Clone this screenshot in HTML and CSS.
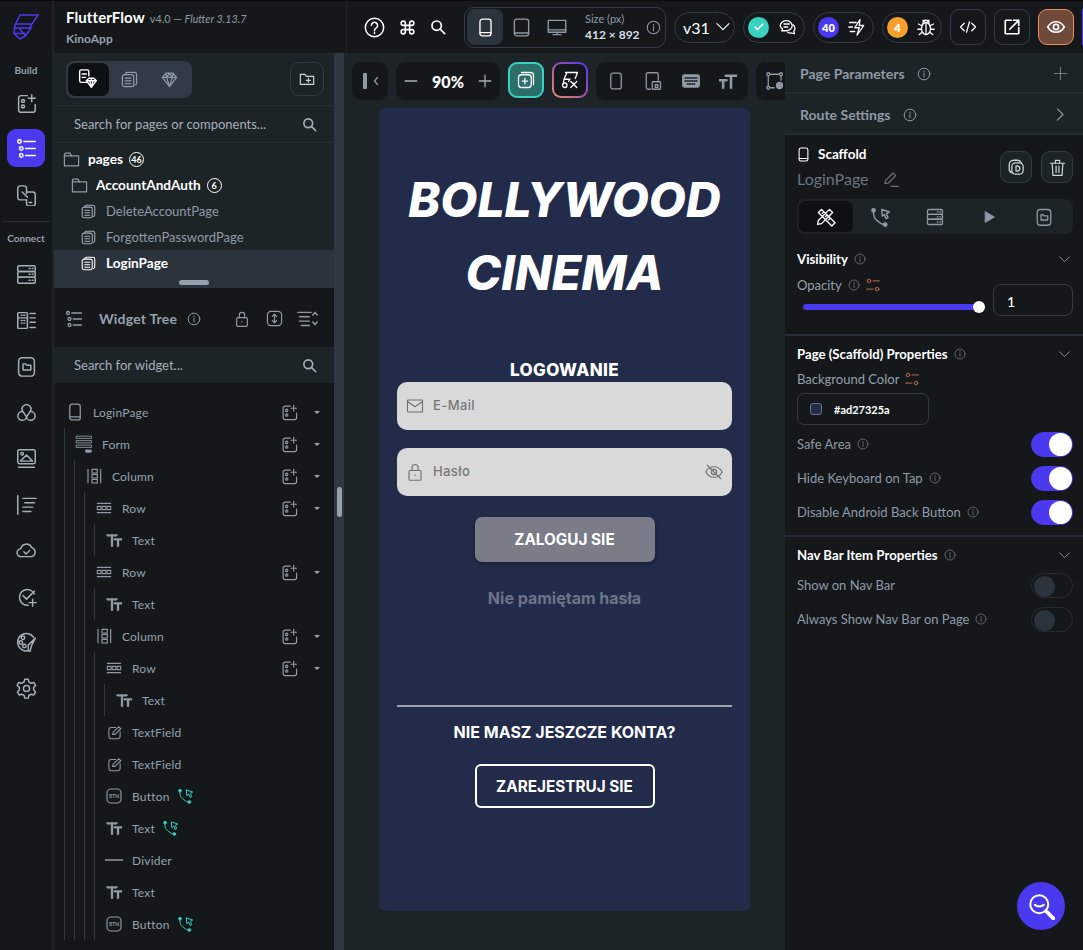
FILE: index.html
```html
<!DOCTYPE html>
<html lang="pl">
<head>
<meta charset="utf-8">
<title>FlutterFlow</title>
<link rel="stylesheet" href="styles.css">
</head>
<body>
<svg class="sprite" xmlns="http://www.w3.org/2000/svg">
  <defs>
    <symbol id="i-add" viewBox="0 0 24 24"><path d="M13 3H6a3 3 0 0 0-3 3v13a3 3 0 0 0 3 3h13a3 3 0 0 0 3-3v-6"/><circle cx="8" cy="9" r="1.7"/><circle cx="8" cy="15.500" r="1.700"/><path d="M18 2v8M14 6h8"/></symbol>
    <symbol id="i-tree" viewBox="0 0 24 24"><circle cx="4" cy="4" r="2"/><circle cx="6" cy="12" r="2"/><circle cx="6" cy="20" r="2"/><path d="M9 4h13M11 12h11M11 20h11"/></symbol>
    <symbol id="i-swap" viewBox="0 0 24 24"><path d="M12 17H5a3 3 0 0 1-3-3V4a3 3 0 0 1 3-3h4a3 3 0 0 1 3 3v6"/><path d="M7 8l6 6"/><path d="M12 8h7a3 3 0 0 1 3 3v10a3 3 0 0 1-3 3h-4a3 3 0 0 1-3-3v-4"/><path d="M15 20h3"/></symbol>
    <symbol id="i-db" viewBox="0 0 24 24"><rect x="2" y="2" width="20" height="6.500" rx="1.500"/><rect x="2" y="8.500" width="20" height="6.500" rx="1.500"/><rect x="2" y="15" width="20" height="7" rx="1.500"/><path d="M15 5.200h1M18.500 5.200h1M15 11.700h1M18.500 11.700h1M15 18.500h1M18.500 18.500h1"/></symbol>
    <symbol id="i-data" viewBox="0 0 24 24"><rect x="2" y="3" width="11" height="18" rx="1"/><path d="M2 9h11M6 6h1M9 6h1M6 12h1M9 12h1M6 15h1M9 15h1M16 4h6M16 9h6M16 14h6M16 20h6"/></symbol>
    <symbol id="i-file" viewBox="0 0 24 24"><rect x="3" y="2" width="18" height="21" rx="4"/><path d="M8 9h3l1 1.500h5V16H8z"/></symbol>
    <symbol id="i-nodes" viewBox="0 0 24 24"><path d="M8 11a5 5 0 1 1 8 0M8 11a5 5 0 1 0 4 6M16 11a5 5 0 1 1-4 6M8 11l4 6 4-6"/></symbol>
    <symbol id="i-media" viewBox="0 0 24 24"><rect x="2" y="2" width="20" height="16" rx="2"/><circle cx="7" cy="6.500" r="1.500"/><path d="M5 15l7-7 7 7zM3 22h18"/></symbol>
    <symbol id="i-align" viewBox="0 0 24 24"><path d="M2 2v21M8 5h15M10 10h11M8 15h11M8 20h9"/></symbol>
    <symbol id="i-cloud" viewBox="0 0 24 24"><path d="M6 19a4.500 4.500 0 0 1-.5-9 6.500 6.500 0 0 1 12.300-1.500A5.500 5.500 0 0 1 18 19z"/><path d="M9 13.500l2.500 2.500 4-4"/></symbol>
    <symbol id="i-check" viewBox="0 0 24 24"><path d="M21 9a9 9 0 1 0-7 13"/><path d="M8 11l4 4 9-9M19 15v8M15 19h8"/></symbol>
    <symbol id="i-palette" viewBox="0 0 24 24"><path d="M14 21.500A10 10 0 1 1 20 6"/><circle cx="8" cy="6.500" r="2"/><circle cx="5.500" cy="12" r="2"/><circle cx="9.500" cy="16" r="2"/><path d="M22 7l-4 8-2 7-2-1 0-6z"/></symbol>
    <symbol id="i-gear" viewBox="0 0 24 24"><circle cx="12" cy="12" r="3.500"/><path d="M10 1.500h4l.7 3 2.700 1.500 3-.9 2 3.400-2.200 2.200v3.100l2.200 2.200-2 3.400-3-.9-2.700 1.500-.7 3h-4l-.7-3-2.700-1.500-3 .9-2-3.400 2.200-2.200v-3.100L1.300 8.500l2-3.400 3 .9L9.300 4.500z"/></symbol>
    <symbol id="i-pages" viewBox="0 0 24 24"><rect x="2" y="5" width="16" height="17" rx="3"/><path d="M6 4a3 3 0 0 1 3-2h10a3 3 0 0 1 3 3v12a3 3 0 0 1-2 3M6 10h8M6 14h8M6 18h8"/></symbol>
    <symbol id="i-gem" viewBox="0 0 24 24"><path d="M7 3h10l5 6-10 13L2 9zM2 9h20M8 9l4 13 4-13M7 3l1 6 4-6 4 6 1-6"/></symbol>
    <symbol id="i-pagegem" viewBox="0 0 24 24"><path d="M11 16H4a2 2 0 0 1-2-2V3a2 2 0 0 1 2-2h7a2 2 0 0 1 2 2v5M5 6h5M5 10h4"/><path d="M13 11h6l3 3-6 8-6-8zM10 14h12M14 14l2 8 2-8M16 11v3"/></symbol>
    <symbol id="i-folder-add" viewBox="0 0 24 24"><path d="M2 5h7l2 3h11v12H2z"/><path d="M14 11v6M11 14h6"/></symbol>
    <symbol id="i-folder" viewBox="0 0 24 24"><path d="M2 21V5a2 2 0 0 1 2-2h6l2 4h10v14z"/><path d="M2 7h10"/></symbol>
    <symbol id="i-search" viewBox="0 0 24 24"><circle cx="10" cy="10" r="7"/><path d="M15 15l7 7"/></symbol>
    <symbol id="i-fabsearch" viewBox="0 0 24 24"><circle cx="10" cy="10" r="8"/><path d="M6 10.500c2 2 6 2 8 0" /><path d="M16 16l6.500 6.500" stroke-width="3.400"/></symbol>
    <symbol id="i-info" viewBox="0 0 24 24"><circle cx="12" cy="12" r="10"/><path d="M12 11v6M12 7v1.500"/></symbol>
    <symbol id="i-help" viewBox="0 0 24 24"><circle cx="12" cy="12" r="10.500"/><path d="M8.500 9.500a3.500 3.500 0 1 1 5.500 3c-1.300.8-2 1.500-2 3M12 17.500v1.500"/></symbol>
    <symbol id="i-cmd" viewBox="0 0 24 24"><path d="M9 9h6v6H9zM9 9H6a3 3 0 1 1 3-3zM15 9V6a3 3 0 1 1 3 3zM9 15v3a3 3 0 1 1-3-3zM15 15h3a3 3 0 1 1-3 3z"/></symbol>
    <symbol id="i-phone" viewBox="0 0 24 24"><rect x="5" y="1.500" width="14" height="21" rx="3"/><path d="M5 18.500h14"/></symbol>
    <symbol id="i-phone-plain" viewBox="0 0 24 24"><rect x="5" y="1.500" width="14" height="21" rx="3"/></symbol>
    <symbol id="i-tablet" viewBox="0 0 24 24"><rect x="3" y="1.500" width="18" height="21" rx="3"/><path d="M3 19h18"/></symbol>
    <symbol id="i-desktop" viewBox="0 0 24 24"><rect x="1" y="3" width="22" height="15"/><path d="M1 15h22M12 18v3M7 21h10"/></symbol>
    <symbol id="i-chev" viewBox="0 0 24 24"><path d="M3 7l9 9 9-9"/></symbol>
    <symbol id="i-tick" viewBox="0 0 24 24"><path d="M4 12l5 5 11-11"/></symbol>
    <symbol id="i-chat" viewBox="0 0 24 24"><path d="M3 11a8 7 0 0 1 16-1c0 4-4 7-8 7H5l1-2.500A7 7 0 0 1 3 11zM8 8h7M8 12h5"/><path d="M20 9a6 6 0 0 1 1 9l1 3-4-1a7 7 0 0 1-5-1"/></symbol>
    <symbol id="i-bolt" viewBox="0 0 24 24"><path d="M16 2L9 13h6l-3 10 9-13h-6zM2 6h9M1 12h5M3 18h6"/></symbol>
    <symbol id="i-bug" viewBox="0 0 24 24"><ellipse cx="12" cy="14" rx="6" ry="8"/><path d="M12 6v16M8 7a4 4 0 0 1 8 0M8 3l1.500 2M16 3l-1.500 2M6 10L2 8M18 10l4-2M6 15H1M18 15h5M7 19l-4 3M17 19l4 3"/></symbol>
    <symbol id="i-code" viewBox="0 0 24 24"><path d="M7 7l-5 5 5 5M17 7l5 5-5 5M14 5l-4 14"/></symbol>
    <symbol id="i-share" viewBox="0 0 24 24"><path d="M11 3H4a1 1 0 0 0-1 1v16a1 1 0 0 0 1 1h16a1 1 0 0 0 1-1v-7"/><path d="M9 15L21 3M14 3h7v7"/></symbol>
    <symbol id="i-eye" viewBox="0 0 24 24"><path d="M1 12s4-7 11-7 11 7 11 7-4 7-11 7S1 12 1 12z"/><circle cx="12" cy="12" r="3.500"/></symbol>
    <symbol id="i-panel" viewBox="0 0 24 24"><path d="M15 5l-6 7 6 7"/></symbol>
    <symbol id="i-plus" viewBox="0 0 24 24"><path d="M12 2v20M2 12h20"/></symbol>
    <symbol id="i-minus" viewBox="0 0 24 24"><path d="M2 12h20"/></symbol>
    <symbol id="i-addpages" viewBox="0 0 24 24"><rect x="2" y="5" width="17" height="17" rx="4"/><path d="M6 2h12a4 4 0 0 1 4 4v12M10.500 10v7M7 13.500h7"/></symbol>
    <symbol id="i-magic" viewBox="0 0 24 24"><path d="M6 2h16l-3 8M8 2L4 11h8l-2 3M4 11l-1 6M13 14l8 8M21 14l-8 8M16 16l2 2"/><circle cx="5" cy="19" r="3"/></symbol>
    <symbol id="i-pagecomp" viewBox="0 0 24 24"><path d="M9 23H5a2 2 0 0 1-2-2V3a2 2 0 0 1 2-2h12a2 2 0 0 1 2 2v8"/><rect x="11" y="13" width="11" height="10" rx="1"/><rect x="15" y="17" width="3.500" height="3.500"/></symbol>
    <symbol id="i-kbd" viewBox="0 0 24 24"><rect x="1" y="4" width="22" height="16" rx="2" fill="currentColor"/><path d="M4 8h16M4 12h16M7 16h10" stroke="#14181b" stroke-dasharray="1.500 1.500"/></symbol>
    <symbol id="i-tt" viewBox="0 0 24 24"><path d="M9 5h14M16 5v16M1 11h9M5.500 11v10" stroke-width="3.500"/></symbol>
    <symbol id="i-graph" viewBox="0 0 24 24"><circle cx="3" cy="3" r="2"/><circle cx="20" cy="3" r="2"/><circle cx="3" cy="21" r="2"/><path d="M5 3h13M3 5v14M5 21h6M20 5v6"/><circle cx="18" cy="18" r="4" fill="currentColor"/></symbol>
    <symbol id="i-lock" viewBox="0 0 24 24"><rect x="4" y="10" width="16" height="13" rx="1.500"/><path d="M8 10V6a4 4 0 0 1 8 0v4M12 16v.500"/></symbol>
    <symbol id="i-expand" viewBox="0 0 24 24"><rect x="2" y="2" width="20" height="20" rx="5"/><path d="M12 6v12M9 9l3-3 3 3M9 15l3 3 3-3"/></symbol>
    <symbol id="i-collapse" viewBox="0 0 24 24"><path d="M1 5h15M3 10h11M3 15h11M5 20h9M18 8l2.500-3 2.500 3M18 16l2.500 3 2.500-3"/></symbol>
    <symbol id="i-form" viewBox="0 0 24 24"><rect x="2" y="1.500" width="20" height="3"/><rect x="2" y="7.500" width="20" height="3"/><rect x="2" y="13.500" width="20" height="3"/><rect x="14" y="20" width="8" height="3" rx="1" fill="currentColor"/></symbol>
    <symbol id="i-col" viewBox="0 0 24 24"><path d="M3 2v20M22 2v20"/><rect x="9" y="2" width="8" height="5.500"/><rect x="9" y="9.500" width="8" height="5.500"/><rect x="9" y="17" width="8" height="5.500"/></symbol>
    <symbol id="i-row" viewBox="0 0 24 24"><path d="M2 5h20M2 19h20"/><rect x="2" y="9.500" width="5.500" height="5"/><rect x="9.300" y="9.500" width="5.500" height="5"/><rect x="16.500" y="9.500" width="5.500" height="5"/></symbol>
    <symbol id="i-text" viewBox="0 0 24 24"><path d="M2 5h14M9 5v16M13 11h10M18 11v10" stroke-width="3.400"/></symbol>
    <symbol id="i-field" viewBox="0 0 24 24"><path d="M14 4H7a4 4 0 0 0-4 4v10a4 4 0 0 0 4 4h10a4 4 0 0 0 4-4v-7"/><path d="M9 15l1-4 9-8 3 3-9 9z"/></symbol>
    <symbol id="i-btn" viewBox="0 0 24 24"><rect x="1.500" y="1.500" width="21" height="21" rx="6"/></symbol>
    <symbol id="i-action" viewBox="0 0 24 24"><circle cx="3" cy="4" r="2" fill="currentColor"/><circle cx="17" cy="21" r="2" fill="currentColor"/><path d="M3 6c0 6 1 8 4 10 3 2 4 4 8 5M13 3l9 3-3.500 2 2 5-2.500 1-2-5-2.500 2z"/></symbol>
    <symbol id="i-divider" viewBox="0 0 24 24"><path d="M0 12h24" stroke-width="2"/></symbol>
    <symbol id="i-ruler" viewBox="0 0 24 24"><path d="M3 7l4-4 17 17-4 4zM8 8l2-2M12 12l2-2M16 16l2-2M17 3l4 4-14 14-5 1 1-5z" transform="scale(.95)"/></symbol>
    <symbol id="i-play" viewBox="0 0 24 24"><path d="M6 3l15 9-15 9z" fill="currentColor"/></symbol>
    <symbol id="i-pencil" viewBox="0 0 24 24"><path d="M3 19l1-5L15 3l4 4L8 18zM12 23h11"/></symbol>
    <symbol id="i-dup" viewBox="0 0 24 24"><path d="M7 20a6 6 0 0 1-4-6V9a6 6 0 0 1 6-6h5a6 6 0 0 1 5 3"/><rect x="6.500" y="6.500" width="15" height="15" rx="5"/><path d="M12 10.500v7h1.500a3.500 3.500 0 0 0 0-7z"/></symbol>
    <symbol id="i-trash" viewBox="0 0 24 24"><path d="M2 6h20M9 6V2h6v4M4.500 6l1 17h13l1-17M10 10v9M14 10v9"/></symbol>
    <symbol id="i-vars" viewBox="0 0 24 24"><circle cx="5" cy="5" r="3"/><circle cx="19" cy="19" r="3"/><path d="M12 5h11M1 19h11"/></symbol>
    <symbol id="i-mail" viewBox="0 0 24 24"><rect x="2" y="4" width="20" height="16" rx="1"/><path d="M2 6l10 7 10-7"/></symbol>
    <symbol id="i-eyeoff" viewBox="0 0 24 24"><path d="M1 12s4-7 11-7 11 7 11 7-4 7-11 7S1 12 1 12zM3 3l18 18"/><circle cx="12" cy="12" r="3.500"/></symbol>
  </defs>
</svg>

<div class="app">
  <header class="topbar">
    <div class="logo-cell">
      <svg class="logo" viewBox="14 14 26 26"><path d="M21 15H39L33 24H16.500ZM16.500 24H32.500L31 28H15.500ZM15.500 28H32L26.500 36 21 39 15 33.500ZM20 28L26.500 36M15 33.500H26.500"/></svg>
    </div>
    <div class="brand">
      <div class="brand-line"><span class="brand-name">FlutterFlow</span><span class="brand-ver">v4.0 — <em>Flutter 3.13.7</em></span></div>
      <div class="brand-proj">KinoApp</div>
    </div>
    <div class="top-tools">
      <button class="plain"><svg class="ic ic-21"><use href="#i-help"/></svg></button>
      <button class="plain"><svg class="ic ic-17 med"><use href="#i-cmd"/></svg></button>
      <button class="plain"><svg class="ic ic-16 thick"><use href="#i-search"/></svg></button>
    </div>
    <div class="device-group">
      <span class="device active"><svg class="ic ic-19"><use href="#i-phone"/></svg></span>
      <span class="device"><svg class="ic ic-19 muted"><use href="#i-tablet"/></svg></span>
      <span class="device"><svg class="ic ic-19 muted wide"><use href="#i-desktop"/></svg></span>
      <div class="size"><span class="size-l">Size (px)</span><span class="size-v">412 × 892</span></div>
      <svg class="ic ic-15 muted"><use href="#i-info"/></svg>
    </div>
    <div class="pill version">v31<svg class="ic ic-16"><use href="#i-chev"/></svg></div>
    <div class="pill pill-chat"><span class="dot teal"><svg class="ic ic-12 tick"><use href="#i-tick"/></svg></span><svg class="ic ic-18"><use href="#i-chat"/></svg></div>
    <div class="pill"><span class="dot indigo">40</span><svg class="ic ic-18"><use href="#i-bolt"/></svg></div>
    <div class="pill pill-bug"><span class="dot orange">4</span><svg class="ic ic-18"><use href="#i-bug"/></svg></div>
    <button class="sq"><svg class="ic ic-18"><use href="#i-code"/></svg></button>
    <button class="sq"><svg class="ic ic-18 med"><use href="#i-share"/></svg></button>
    <button class="sq eye"><svg class="ic ic-18 med"><use href="#i-eye"/></svg></button>
    <div class="run-edge"></div>
  </header>

  <div class="main">
    <nav class="rail">
      <div class="rail-label">Build</div>
      <a class="rail-item"><svg class="ic ic-21"><use href="#i-add"/></svg></a>
      <a class="rail-item active"><svg class="ic ic-21"><use href="#i-tree"/></svg></a>
      <a class="rail-item"><svg class="ic ic-21"><use href="#i-swap"/></svg></a>
      <div class="rail-sep"></div>
      <div class="rail-label">Connect</div>
      <a class="rail-item"><svg class="ic ic-21"><use href="#i-db"/></svg></a>
      <a class="rail-item"><svg class="ic ic-21"><use href="#i-data"/></svg></a>
      <a class="rail-item"><svg class="ic ic-21"><use href="#i-file"/></svg></a>
      <a class="rail-item"><svg class="ic ic-21"><use href="#i-nodes"/></svg></a>
      <a class="rail-item"><svg class="ic ic-21"><use href="#i-media"/></svg></a>
      <a class="rail-item"><svg class="ic ic-21"><use href="#i-align"/></svg></a>
      <a class="rail-item"><svg class="ic ic-21"><use href="#i-cloud"/></svg></a>
      <a class="rail-item"><svg class="ic ic-21"><use href="#i-check"/></svg></a>
      <a class="rail-item"><svg class="ic ic-21"><use href="#i-palette"/></svg></a>
      <a class="rail-item"><svg class="ic ic-21"><use href="#i-gear"/></svg></a>
    </nav>

    <aside class="left">
      <div class="left-body">
        <div class="tabs-row">
          <div class="seg">
            <span class="seg-item on"><svg class="ic ic-20 white"><use href="#i-pagegem"/></svg></span>
            <span class="seg-item"><svg class="ic ic-17 muted"><use href="#i-pages"/></svg></span>
            <span class="seg-item"><svg class="ic ic-17 muted"><use href="#i-gem"/></svg></span>
          </div>
          <button class="icon-btn"><svg class="ic ic-16"><use href="#i-folder-add"/></svg></button>
        </div>
        <div class="search"><span>Search for pages or components...</span><svg class="ic ic-15 thick"><use href="#i-search"/></svg></div>
        <div class="pages">
          <div class="p-row"><svg class="ic ic-17 muted"><use href="#i-folder"/></svg><b>pages</b><span class="count">46</span></div>
          <div class="p-row d1"><svg class="ic ic-17 muted"><use href="#i-folder"/></svg><b>AccountAndAuth</b><span class="count">6</span></div>
          <div class="p-row d2"><svg class="ic ic-15 light"><use href="#i-pages"/></svg><span>DeleteAccountPage</span></div>
          <div class="p-row d2"><svg class="ic ic-15 light"><use href="#i-pages"/></svg><span>ForgottenPasswordPage</span></div>
          <div class="p-row d2 sel"><svg class="ic ic-15 white"><use href="#i-pages"/></svg><b>LoginPage</b></div>
        </div>
        <div class="h-scroll"><span></span></div>

        <div class="wt-head">
          <svg class="ic ic-18 muted"><use href="#i-tree"/></svg>
          <span class="wt-title">Widget Tree</span>
          <svg class="ic ic-14 muted"><use href="#i-info"/></svg>
          <span class="grow"></span>
          <svg class="ic ic-16 muted"><use href="#i-lock"/></svg>
          <svg class="ic ic-17 muted"><use href="#i-expand"/></svg>
          <svg class="ic ic-21 muted"><use href="#i-collapse"/></svg>
        </div>
        <div class="search wt-search"><span>Search for widget...</span><svg class="ic ic-15 thick"><use href="#i-search"/></svg></div>

        <div class="tree">
          <div class="row top"><span class="ti"><svg class="ic ic-18 muted"><use href="#i-phone"/></svg></span><span class="tl">LoginPage</span><span class="ta"><svg class="ic ic-17 muted"><use href="#i-add"/></svg><i class="caret"></i></span></div>
          <div class="kids">
            <div class="row"><span class="ti"><svg class="ic ic-18 muted thin"><use href="#i-form"/></svg></span><span class="tl">Form</span><span class="ta"><svg class="ic ic-17 muted"><use href="#i-add"/></svg><i class="caret"></i></span></div>
            <div class="kids">
              <div class="row"><span class="ti"><svg class="ic ic-16 muted"><use href="#i-col"/></svg></span><span class="tl">Column</span><span class="ta"><svg class="ic ic-17 muted"><use href="#i-add"/></svg><i class="caret"></i></span></div>
              <div class="kids">
                <div class="row"><span class="ti"><svg class="ic ic-16 muted"><use href="#i-row"/></svg></span><span class="tl">Row</span><span class="ta"><svg class="ic ic-17 muted"><use href="#i-add"/></svg><i class="caret"></i></span></div>
                <div class="kids">
                  <div class="row"><span class="ti"><svg class="ic ic-16 muted"><use href="#i-text"/></svg></span><span class="tl">Text</span></div>
                </div>
                <div class="row"><span class="ti"><svg class="ic ic-16 muted"><use href="#i-row"/></svg></span><span class="tl">Row</span><span class="ta"><svg class="ic ic-17 muted"><use href="#i-add"/></svg><i class="caret"></i></span></div>
                <div class="kids">
                  <div class="row"><span class="ti"><svg class="ic ic-16 muted"><use href="#i-text"/></svg></span><span class="tl">Text</span></div>
                </div>
                <div class="row"><span class="ti"><svg class="ic ic-16 muted"><use href="#i-col"/></svg></span><span class="tl">Column</span><span class="ta"><svg class="ic ic-17 muted"><use href="#i-add"/></svg><i class="caret"></i></span></div>
                <div class="kids">
                  <div class="row"><span class="ti"><svg class="ic ic-16 muted"><use href="#i-row"/></svg></span><span class="tl">Row</span><span class="ta"><svg class="ic ic-17 muted"><use href="#i-add"/></svg><i class="caret"></i></span></div>
                  <div class="kids">
                    <div class="row"><span class="ti"><svg class="ic ic-16 muted"><use href="#i-text"/></svg></span><span class="tl">Text</span></div>
                  </div>
                  <div class="row"><span class="ti"><svg class="ic ic-15 muted"><use href="#i-field"/></svg></span><span class="tl">TextField</span></div>
                  <div class="row"><span class="ti"><svg class="ic ic-15 muted"><use href="#i-field"/></svg></span><span class="tl">TextField</span></div>
                  <div class="row"><span class="ti btn-ic"><svg class="ic ic-16 muted"><use href="#i-btn"/></svg><small>BTN</small></span><span class="tl">Button</span><svg class="ic ic-16 action"><use href="#i-action"/></svg></div>
                  <div class="row"><span class="ti"><svg class="ic ic-16 muted"><use href="#i-text"/></svg></span><span class="tl">Text</span><svg class="ic ic-16 action"><use href="#i-action"/></svg></div>
                  <div class="row"><span class="ti"><svg class="ic ic-18 muted"><use href="#i-divider"/></svg></span><span class="tl">Divider</span></div>
                  <div class="row"><span class="ti"><svg class="ic ic-16 muted"><use href="#i-text"/></svg></span><span class="tl">Text</span></div>
                  <div class="row"><span class="ti btn-ic"><svg class="ic ic-16 muted"><use href="#i-btn"/></svg><small>BTN</small></span><span class="tl">Button</span><svg class="ic ic-16 action"><use href="#i-action"/></svg></div>
                </div>
              </div>
            </div>
          </div>
        </div>
      </div>
      <div class="v-scroll"><span></span></div>
    </aside>

    <section class="canvas">
      <div class="toolbar">
        <div class="tg tg-one"><span class="panel-bar"></span><svg class="ic ic-12 muted thick"><use href="#i-panel"/></svg></div>
        <div class="tg tg-zoom"><svg class="ic ic-14 light med"><use href="#i-minus"/></svg><b>90%</b><svg class="ic ic-14 light med"><use href="#i-plus"/></svg></div>
        <button class="tb teal-btn"><svg class="ic ic-18 white"><use href="#i-addpages"/></svg></button>
        <button class="tb grad-btn"><span><svg class="ic ic-18 white"><use href="#i-magic"/></svg></span></button>
        <div class="tg tg-dev">
          <svg class="ic ic-18 muted"><use href="#i-phone-plain"/></svg>
          <svg class="ic ic-18 muted"><use href="#i-pagecomp"/></svg>
          <svg class="ic ic-18 muted"><use href="#i-kbd"/></svg>
          <svg class="ic ic-18 muted"><use href="#i-tt"/></svg>
        </div>
        <div class="tg tg-last"><svg class="ic ic-18 muted"><use href="#i-graph"/></svg></div>
      </div>

      <div class="phone">
        <h1 class="title">BOLLYWOOD<br>CINEMA</h1>
        <h2 class="login">LOGOWANIE</h2>
        <div class="field"><svg class="ic ic-18 gr"><use href="#i-mail"/></svg><span>E-Mail</span></div>
        <div class="field f2"><svg class="ic ic-18 gr"><use href="#i-lock"/></svg><span>Hasło</span><svg class="ic ic-18 gr end"><use href="#i-eyeoff"/></svg></div>
        <div class="btn-main">ZALOGUJ SIE</div>
        <div class="forgot">Nie pamiętam hasła</div>
        <div class="ph-div"></div>
        <div class="noacc">NIE MASZ JESZCZE KONTA?</div>
        <div class="btn-out">ZAREJESTRUJ SIE</div>
      </div>
    </section>

    <aside class="right">
      <div class="acc"><span>Page Parameters</span><svg class="ic ic-14 muted"><use href="#i-info"/></svg><span class="grow"></span><svg class="ic ic-15 muted thin"><use href="#i-plus"/></svg></div>
      <div class="acc"><span>Route Settings</span><svg class="ic ic-14 muted"><use href="#i-info"/></svg><span class="grow"></span><svg class="ic ic-15 muted rot"><use href="#i-chev"/></svg></div>

      <div class="scaffold">
        <div class="sc-left">
          <div class="sc-type"><svg class="ic ic-15 white"><use href="#i-phone"/></svg><b>Scaffold</b></div>
          <div class="sc-name"><span>LoginPage</span><svg class="ic ic-16 dim"><use href="#i-pencil"/></svg></div>
        </div>
        <button class="icon-btn small"><svg class="ic ic-18"><use href="#i-dup"/></svg></button>
        <button class="icon-btn small"><svg class="ic ic-17"><use href="#i-trash"/></svg></button>
      </div>
      <div class="r-tabs">
        <span class="r-tab on"><svg class="ic ic-20 white"><use href="#i-ruler"/></svg></span>
        <span class="r-tab"><svg class="ic ic-20 muted"><use href="#i-action"/></svg></span>
        <span class="r-tab"><svg class="ic ic-18 muted"><use href="#i-db"/></svg></span>
        <span class="r-tab"><svg class="ic ic-14 muted"><use href="#i-play"/></svg></span>
        <span class="r-tab"><svg class="ic ic-18 muted"><use href="#i-file"/></svg></span>
      </div>

      <section class="sec first">
        <div class="sec-h"><b>Visibility</b><svg class="ic ic-12 dim"><use href="#i-info"/></svg><span class="grow"></span><svg class="ic ic-13 muted"><use href="#i-chev"/></svg></div>
        <div class="opacity">
          <div class="op-left">
            <div class="lbl"><span>Opacity</span><svg class="ic ic-12 dim"><use href="#i-info"/></svg><svg class="ic ic-14 orange-ic"><use href="#i-vars"/></svg></div>
            <div class="slider"><i></i></div>
          </div>
          <div class="num">1</div>
        </div>
      </section>

      <section class="sec">
        <div class="sec-h"><b>Page (Scaffold) Properties</b><svg class="ic ic-12 dim"><use href="#i-info"/></svg><span class="grow"></span><svg class="ic ic-13 muted"><use href="#i-chev"/></svg></div>
        <div class="lbl bg"><span>Background Color</span><svg class="ic ic-14 orange-ic"><use href="#i-vars"/></svg></div>
        <div class="color"><i></i><b>#ad27325a</b></div>
        <div class="opt"><span>Safe Area</span><svg class="ic ic-12 dim"><use href="#i-info"/></svg><span class="grow"></span><span class="tog on"></span></div>
        <div class="opt"><span>Hide Keyboard on Tap</span><svg class="ic ic-12 dim"><use href="#i-info"/></svg><span class="grow"></span><span class="tog on"></span></div>
        <div class="opt"><span>Disable Android Back Button</span><svg class="ic ic-12 dim"><use href="#i-info"/></svg><span class="grow"></span><span class="tog on"></span></div>
      </section>

      <section class="sec last">
        <div class="sec-h"><b>Nav Bar Item Properties</b><svg class="ic ic-12 dim"><use href="#i-info"/></svg><span class="grow"></span><svg class="ic ic-13 muted"><use href="#i-chev"/></svg></div>
        <div class="opt"><span>Show on Nav Bar</span><span class="grow"></span><span class="tog"></span></div>
        <div class="opt"><span>Always Show Nav Bar on Page</span><svg class="ic ic-12 dim"><use href="#i-info"/></svg><span class="grow"></span><span class="tog"></span></div>
      </section>
    </aside>
  </div>
</div>

<button class="fab"><svg class="ic ic-fab"><use href="#i-fabsearch"/></svg></button>
</body>
</html>
```
FILE: styles.css
```css
* { box-sizing: border-box; }
html, body { margin: 0; height: 100%; overflow: hidden; }
body { background: #14181b; color: #fff; font-family: "Lato", "Inter", sans-serif; font-size: 13px; }
.sprite { position: absolute; width: 0; height: 0; }
button { background: none; border: 0; padding: 0; color: inherit; font: inherit; }
b { font-weight: 700; }
.grow { flex: 1; }

.ic { fill: none; stroke: currentColor; stroke-width: 1.7; stroke-linecap: round; stroke-linejoin: round; flex: none; display: block; }
.ic-12 { width: 12px; height: 12px; } .ic-13 { width: 13px; height: 13px; }
.ic-14 { width: 14px; height: 14px; } .ic-15 { width: 15px; height: 15px; }
.ic-16 { width: 16px; height: 16px; } .ic-17 { width: 17px; height: 17px; }
.ic-18 { width: 18px; height: 18px; } .ic-19 { width: 19px; height: 19px; }
.ic-20 { width: 20px; height: 20px; } .ic-21 { width: 21px; height: 21px; }
.muted { color: #8f9aa6; } .dim { color: #6b7580; } .white { color: #fff; } .light { color: #a5afb9; }
.thick { stroke-width: 2.6; } .med { stroke-width: 2.2; } .thin { stroke-width: 1.2; }
.wide { width: 22px; }
.rot { transform: rotate(-90deg); }
.action { color: #39d2c0; margin-left: 8px; stroke-width: 1.5; }
.orange-ic { color: #c26b45; }
.gr { color: #6f6f6f; stroke-width: 1.5; }
.tick { stroke-width: 3; }

.app { display: flex; flex-direction: column; height: 950px; width: 1083px; overflow: hidden; }

/* Top bar */
.topbar { height: 53px; flex: none; display: flex; align-items: center; border-top: 1px solid #0a0c0d; background: #14181b; }
.logo-cell { width: 54px; height: 100%; display: flex; align-items: center; justify-content: center; border-right: 2px solid #1d2428; }
.logo { width: 26px; height: 26px; fill: none; stroke: #4b39ef; stroke-width: 1.5; }
.brand { width: 293px; padding-left: 12px; height: 100%; display: flex; flex-direction: column; justify-content: center; gap: 5px; border-right: 1px solid #1d2428; }
.brand-line { display: flex; align-items: baseline; gap: 5px; }
.brand-name { font-size: 15px; font-weight: 700; letter-spacing: .1px; }
.brand-ver { font-size: 10.800px; color: #8f9aa6; }
.brand-proj { font-size: 12px; color: #95a1ac; font-weight: 700; }
.top-tools { display: flex; align-items: center; gap: 14px; margin-left: 17px; width: 100px; }
.plain { display: flex; }
.device-group { width: 202px; height: 41px; border: 1px solid #323b45; border-radius: 10px; display: flex; align-items: center; padding: 2px; margin-right: 8px; }
.device { width: 36px; height: 36px; border-radius: 8px; display: flex; align-items: center; justify-content: center; flex: none; }
.device.active { background: #2b333c; }
.size { display: flex; flex-direction: column; margin-left: 10px; margin-right: 11px; gap: 2px; width: 50px; }
.size-l { font-size: 11px; color: #8f9aa6; }
.size-v { font-size: 12px; font-weight: 700; color: #d9dee3; white-space: nowrap; }
.pill { height: 31px; border: 1px solid #323b45; border-radius: 16px; display: flex; align-items: center; gap: 9px; padding: 0 9px 0 4px; margin-right: 8px; width: 61px; flex: none; }
.pill-chat { width: 62px; }
.pill-bug { width: 60px; }
.pill.version { padding: 0 0 0 8px; gap: 5px; font-size: 16px; }
.dot { width: 21px; height: 21px; border-radius: 50%; display: flex; align-items: center; justify-content: center; font-size: 11px; font-weight: 800; flex: none; }
.dot.teal { background: #39d2c0; } .dot.indigo { background: #4b39ef; } .dot.orange { background: #f8a02c; }
.sq { width: 36px; height: 36px; border: 1px solid #323b45; border-radius: 9px; display: flex; align-items: center; justify-content: center; margin-right: 8px; flex: none; }
.sq.eye { background: #6f4a3a; border: 1px solid #ee8b60; }
.run-edge { width: 1px; height: 36px; background: #4b39ef; }

.main { flex: 1; display: flex; min-height: 0; }

/* Rail */
.rail { width: 54px; flex: none; border-right: 2px solid #1d2428; display: flex; flex-direction: column; align-items: center; padding-top: 10px; background: #14181b; }
.rail-label { font-size: 10px; font-weight: 700; color: #95a1ac; height: 14px; line-height: 14px; margin-bottom: 3px; }
.rail-sep + .rail-label { margin-bottom: 6px; }
.rail-item { width: 38px; height: 46px; padding: 4px 0; display: flex; align-items: center; justify-content: center; color: #a5afb9; }
.rail-item.active { color: #fff; background: #4b39ef; height: 38px; border-radius: 9px; margin: 3px 0 5px; padding: 0; }
.rail-sep { width: 48px; height: 1px; background: #262d34; margin: 3px 0 9px; }

/* Left panel */
.left { width: 290px; flex: none; display: flex; }
.left-body { width: 280px; display: flex; flex-direction: column; min-height: 0; }
.tabs-row { height: 53px; display: flex; align-items: center; justify-content: space-between; padding: 0 10px 0 12px; background: #1d2428; border-bottom: 1px solid #262d34; flex: none; }
.seg { width: 126px; height: 37px; background: #323b45; border-radius: 8px; display: flex; padding: 2px; }
.seg-item { width: 41px; display: flex; align-items: center; justify-content: center; border-radius: 7px; }
.seg-item.on { background: #0e1113; }
.icon-btn { width: 34px; height: 34px; border: 1px solid #323b45; border-radius: 9px; display: flex; align-items: center; justify-content: center; color: #cfd5da; flex: none; }
.search { height: 37px; display: flex; align-items: center; justify-content: space-between; padding: 0 17px 0 20px; background: #1d2428; color: #a5afb9; border-bottom: 1px solid #262d34; flex: none; font-size: 13px; }
.search .ic { color: #a5afb9; }
.pages { background: #1d2428; padding-top: 3px; flex: none; }
.p-row { height: 26px; display: flex; align-items: center; gap: 8px; padding-left: 9px; color: #8f9aa6; }
.p-row b { color: #fff; font-size: 13.600px; }
.p-row.d1 { padding-left: 17px; }
.p-row.d2 { padding-left: 27px; gap: 10px; }
.p-row.sel { background: #2b333c; }
.count { width: 15px; height: 15px; border: 1px solid #fff; border-radius: 50%; font-size: 9px; font-weight: 700; color: #fff; display: flex; align-items: center; justify-content: center; margin-left: -2px; }
.h-scroll { height: 12px; background: #2b333c; flex: none; display: flex; justify-content: center; align-items: center; }
.h-scroll span { width: 30px; height: 5px; border-radius: 3px; background: #95a1ac; }
.wt-head { height: 59px; padding: 2px 16px 0 11px; flex: none; display: flex; align-items: center; gap: 8px; }
.wt-title { font-size: 14px; font-weight: 700; color: #95a1ac; margin-left: 8px; margin-right: 2px; letter-spacing: .2px; }
.wt-head .ic-16 { margin-right: 8px; }
.wt-head .ic-17 { margin-right: 6px; }
.wt-search { background: #1d2428; border: 0; height: 36px; margin-bottom: 13px; }
.tree { height: 544px; overflow: hidden; padding-left: 1px; }
.row { height: 32px; display: flex; align-items: center; padding-left: 7px; font-size: 12px; color: #95a1ac; }
.row.top { padding-left: 8px; }
.ti { width: 24px; margin-right: 6px; display: flex; align-items: center; justify-content: center; position: relative; flex: none; }
.tl { letter-spacing: .2px; }
.ta { margin-left: auto; display: flex; align-items: center; width: 53px; gap: 16px; flex: none; }
.caret { width: 0; height: 0; border: 3px solid transparent; border-top: 3.500px solid #95a1ac; border-bottom: 0; }
.kids { margin-left: 9px; border-left: 1px solid #323b45; }
.btn-ic small { position: absolute; font-size: 5px; font-weight: 700; color: #8f9aa6; }
.v-scroll { width: 10px; background: #2f3842; flex: none; padding-top: 434px; display: flex; justify-content: center; }
.v-scroll span { width: 5px; height: 30px; background: #95a1ac; border-radius: 3px; }

/* Canvas */
.canvas { width: 441px; flex: none; background: #1d2428; overflow: hidden; display: flex; flex-direction: column; align-items: flex-start; }
.toolbar { display: flex; gap: 8px; margin: 9px 0 8px 8px; height: 38px; flex: none; }
.tg { height: 38px; background: #14181b; border-radius: 9px; display: flex; align-items: center; flex: none; color: #fff; }
.tg-one { width: 36px; padding-left: 11px; gap: 3px; }
.panel-bar { width: 4px; height: 16px; background: #8f9aa6; border-radius: 1px; }
.tg-zoom { width: 104px; justify-content: space-between; padding: 0 8px; font-size: 16px; }
.tg-zoom b { font-weight: 900; }
.tb { width: 36px; height: 36px; border-radius: 9px; display: flex; align-items: center; justify-content: center; flex: none; }
.teal-btn { background: #2a6f6a; border: 2px solid #39d2c0; }
.grad-btn { background: linear-gradient(45deg, #ee8b60, #9a4fb5 55%, #4b39ef); padding: 2px; }
.grad-btn span { width: 100%; height: 100%; background: #14181b; border-radius: 7px; display: flex; align-items: center; justify-content: center; }
.tg-dev { width: 152px; justify-content: space-between; padding: 0 11px; }
.tg-last { width: 40px; padding-left: 10px; }
.phone { width: 371px; height: 803px; margin-left: 35px; background: #222b4a; border-radius: 6px; display: flex; flex-direction: column; align-items: center; padding: 55px 18px 0; font-family: "Inter", sans-serif; flex: none; }
.title { margin: 0; font-size: 48px; font-weight: 800; font-style: italic; line-height: 73px; text-align: center; letter-spacing: 0; }
.login { margin: 50px 0 1px; font-size: 17px; line-height: 22px; font-weight: 800; letter-spacing: .4px; }
.field { width: 335px; height: 48px; flex: none; background: #d9d9d9; border-radius: 10px; display: flex; align-items: center; padding-left: 9px; gap: 9px; color: #777; font-size: 13px; font-weight: 500; letter-spacing: .4px; }
.field span { margin-top: -3px; }
.field .end { margin-left: auto; margin-right: 9px; }
.f2 { margin-top: 18px; }
.btn-main { width: 180px; height: 45px; flex: none; margin-top: 21px; background: #7a7c88; border-radius: 7px; display: flex; align-items: center; justify-content: center; font-size: 15.300px; font-weight: 700; box-shadow: 0 2px 4px rgba(0,0,0,.3); }
.forgot { margin-top: 26px; font-size: 16px; font-weight: 700; color: #6d7389; line-height: 20px; }
.ph-div { width: 335px; height: 2px; background: #9ea2b2; margin-top: 97px; flex: none; }
.noacc { margin-top: 15px; font-size: 16px; font-weight: 700; line-height: 20px; }
.btn-out { width: 180px; height: 44px; flex: none; margin-top: 22px; border: 2px solid #fff; border-radius: 6px; display: flex; align-items: center; justify-content: center; font-size: 15.300px; font-weight: 700; }

/* Right panel */
.right { width: 298px; flex: none; display: flex; flex-direction: column; background: #14181b; }
.acc { height: 41px; background: #1d2428; border-bottom: 2px solid #262d34; display: flex; align-items: center; gap: 12px; padding: 2px 15px 0; color: #8f9aa6; font-weight: 700; font-size: 14px; flex: none; }
.scaffold { display: flex; align-items: center; gap: 9px; padding: 0 10px 0 12px; height: 64px; flex: none; }
.sc-left { flex: 1; display: flex; flex-direction: column; gap: 7px; }
.sc-type { display: flex; align-items: center; gap: 7px; font-size: 13.500px; }
.sc-type .ic { margin-left: -1px; }
.sc-name { display: flex; align-items: center; gap: 14px; font-size: 16px; color: #6b7580; }
.icon-btn.small { width: 32px; height: 32px; background: #1d2428; }
.r-tabs { margin: 0 10px 0 12px; height: 35px; flex: none; background: #1d2428; border-radius: 8px; display: flex; padding: 2px; }
.r-tab { flex: 1; display: flex; align-items: center; justify-content: center; border-radius: 6px; }
.r-tab.on { background: #0e1113; }
.sec { padding: 0 10px 0 12px; border-bottom: 2px solid #262d34; flex: none; }
.sec.last { border: 0; }
.sec.first { margin-top: 15px; height: 87px; }
.sec + .sec { padding-top: 8px; }
.sec-h { display: flex; align-items: center; gap: 6px; height: 20px; font-size: 13.200px; }
.sec-h .ic-13 { margin-right: 2px; }
.lbl { display: flex; align-items: center; gap: 6px; color: #95a1ac; font-size: 13px; height: 20px; }
.opacity { display: flex; align-items: flex-start; gap: 8px; margin-top: 6px; }
.op-left { width: 188px; }
.slider { margin: 9px 0 0 6px; height: 6px; background: #4b39ef; border-radius: 3px; position: relative; width: 176px; }
.slider i { position: absolute; right: -6px; top: -3px; width: 12px; height: 12px; border-radius: 50%; background: #fff; }
.num { width: 80px; height: 32px; border: 1px solid #323b45; border-radius: 8px; font-size: 14px; line-height: 34px; padding-left: 13px; font-weight: 500; margin-top: 9px; }
.lbl.bg { margin-top: 5px; }
.color { width: 132px; height: 32px; border: 1px solid #323b45; border-radius: 7px; margin-top: 4px; display: flex; align-items: center; padding-left: 12px; gap: 12px; font-size: 11px; margin-bottom: 2px; }
.color i { width: 12px; height: 12px; border-radius: 3px; background: #222b4a; border: 1px solid #6b7580; }
.opt { height: 34px; display: flex; align-items: center; gap: 6px; color: #8f9aa6; font-size: 13px; }
.sec .opt:last-child { margin-bottom: 6px; }
.sec.last .sec-h + .opt { margin-top: 3px; }
.tog { width: 42px; height: 25px; border-radius: 13px; border: 1px solid #262d34; position: relative; flex: none; }
.tog::after { content: ""; position: absolute; left: 2px; top: 2px; width: 21px; height: 21px; border-radius: 50%; background: #2b333c; }
.tog.on { background: #4b39ef; border-color: #4b39ef; }
.tog.on::after { left: auto; right: 0; top: 0; width: 23px; height: 23px; background: #fff; }

.fab { position: absolute; left: 1017px; top: 882px; width: 48px; height: 48px; border-radius: 50%; background: #4b39ef; display: flex; align-items: center; justify-content: center; color: #fff; }
.ic-fab { width: 27px; height: 27px; stroke-width: 1.8; }
```
